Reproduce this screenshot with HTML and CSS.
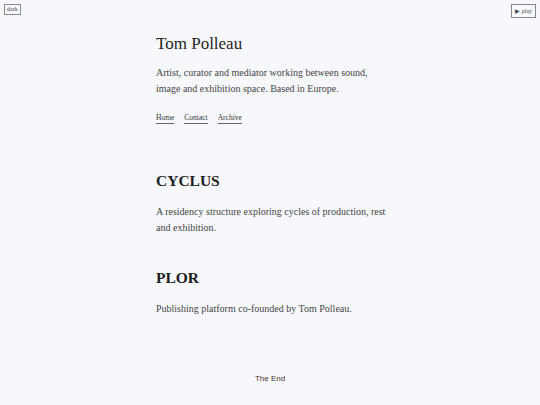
FILE: index.html
```html
<!DOCTYPE html>
<html>
<head>
<meta charset="utf-8">
<link rel="stylesheet" href="styles.css">
</head>
<body>
<button class="toggle dark-btn">dark</button>
<button class="toggle play-btn">&#9654; play</button>
<main class="page">
  <header class="intro">
    <h1 class="name">Tom Polleau</h1>
    <p class="bio">Artist, curator and mediator working between sound, image and exhibition space. Based in Europe.</p>
    <nav class="nav">
      <a href="#">Home</a>
      <a href="#">Contact</a>
      <a href="#">Archive</a>
    </nav>
  </header>
  <section class="project">
    <h2 class="title">CYCLUS</h2>
    <p class="text">A residency structure exploring cycles of production, rest and exhibition.</p>
  </section>
  <section class="project">
    <h2 class="title">PLOR</h2>
    <p class="text">Publishing platform co-founded by Tom Polleau.</p>
  </section>
  <footer class="end">The End</footer>
</main>
</body>
</html>
```
FILE: styles.css
```css
html, body {
  margin: 0;
  padding: 0;
  background: #f7f8fc;
}
body {
  font-family: "Liberation Serif", "DejaVu Serif", serif;
  color: #222;
  min-height: 405px;
  position: relative;
}
.toggle {
  position: absolute;
  top: 4px;
  font-family: "Liberation Serif", serif;
  font-size: 6px;
  color: #444;
  background: #f7f8fc;
  border: 1px solid #888;
  border-radius: 0;
  padding: 0 2px;
  line-height: 9px;
}
.dark-btn { left: 4px; }
.play-btn { right: 4px; padding: 1px 3px; line-height: 10px; }
.page {
  box-sizing: border-box;
  width: 240px;
  margin: 0 auto;
  padding: 34px 0 0 6px;
}
.name {
  font-weight: normal;
  font-size: 17px;
  line-height: 20px;
  margin: 0 0 11px;
  color: #1d1d1d;
}
.bio, .text {
  font-size: 10px;
  line-height: 15.5px;
  color: #444;
  margin: 0;
}
.nav {
  display: flex;
  gap: 10px;
  margin-top: 17px;
  font-size: 7.5px;
}
.nav a {
  color: #333;
  text-decoration: none;
  border-bottom: 1px solid #666;
  line-height: 10px;
}
.project {
  margin-top: 48px;
}
.project + .project { margin-top: 34px; }
.title {
  font-size: 15.5px;
  line-height: 18px;
  margin: 0 0 14px;
  color: #1d1d1d;
}
.end {
  text-align: center;
  margin-left: -6px;
  font-family: "Liberation Sans", sans-serif;
  font-size: 8px;
  color: #4a2f2a;
  margin-top: 57px;
}
```
